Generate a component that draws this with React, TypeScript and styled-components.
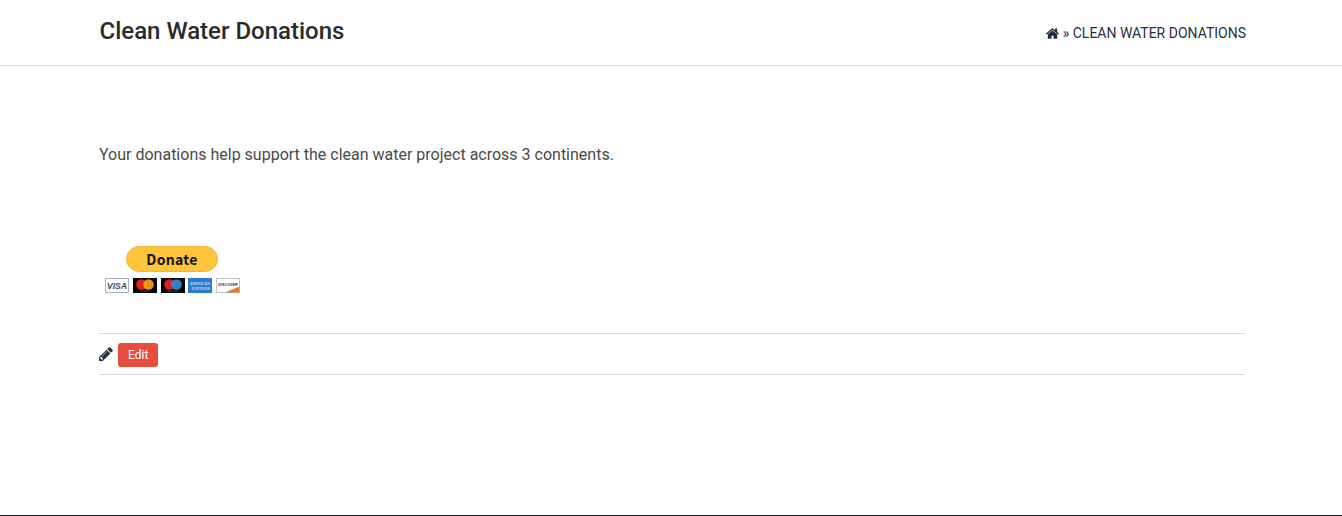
import React from "react";
import styled, { createGlobalStyle } from "styled-components";

const GlobalStyle = createGlobalStyle`
  html, body {
    margin: 0;
    padding: 0;
    background: #fff;
    font-family: Roboto, "Liberation Sans", sans-serif;
    overflow: hidden;
  }
`;

const S = {
  Page: styled.div`
    height: 516px;
    box-sizing: border-box;
    border-bottom: 1px solid #23282d;
    display: flex;
    flex-direction: column;
  `,
  TitleBar: styled.header`
    height: 66px;
    box-sizing: border-box;
    border-bottom: 1px solid #d8d8d8;
    padding: 0 96px 0 99.5px;
    display: flex;
    align-items: center;
    justify-content: space-between;
  `,
  Title: styled.h1`
    margin: 0 0 4px;
    font-size: 24px;
    line-height: 30px;
    font-weight: 500;
    color: #2b2b2b;
  `,
  Breadcrumb: styled.nav`
    margin-top: 1px;
    display: flex;
    align-items: center;
    gap: 4px;
    font-size: 14px;
    line-height: 20px;
    color: #1f2f46;
    text-transform: uppercase;
  `,
  HomeIcon: styled.svg`
    display: block;
    width: 13px;
    height: 11px;
    fill: #1f2b3a;
  `,
  Content: styled.main`
    padding: 0 97px 0 99px;
  `,
  Intro: styled.p`
    margin: 78px 0 0;
    font-size: 16px;
    line-height: 22px;
    color: #4a4a4a;
  `,
  DonateForm: styled.div`
    margin-top: 80px;
    width: 146px;
    display: flex;
    flex-direction: column;
    align-items: center;
  `,
  DonateButton: styled.button`
    width: 92px;
    height: 26px;
    padding: 0;
    border: 1px solid #f0b43c;
    border-radius: 13px;
    background: #ffc439;
    color: #111;
    font-family: "Noto Sans CJK JP", "Noto Sans", sans-serif;
    font-size: 14px;
    font-weight: 700;
    line-height: 24px;
    letter-spacing: 0.3px;
  `,
  Cards: styled.div`
    margin: 6px 0 0 1px;
    display: flex;
    gap: 3.75px;
  `,
  Card: styled.svg`
    display: block;
    width: 24px;
    height: 15px;
  `,
  EditRow: styled.div`
    margin-top: 40px;
    height: 42px;
    box-sizing: border-box;
    padding-top: 1px;
    border-top: 1px solid #d8d8d8;
    border-bottom: 1px solid #d8d8d8;
    display: flex;
    align-items: center;
    gap: 5px;
  `,
  PencilIcon: styled.svg`
    display: block;
    width: 14px;
    height: 14px;
    margin-top: -2px;
    fill: #23344a;
  `,
  EditButton: styled.a`
    height: 24px;
    padding: 0 10px;
    border-radius: 3px;
    background: #e74c3c;
    color: #fff;
    font-size: 12px;
    line-height: 24px;
  `,
};

const Visa = () => (
  <S.Card viewBox="0 0 24 15">
    <rect x="0.5" y="0.5" width="23" height="14" fill="#fff" stroke="#aab0bd" />
    <text x="12" y="10.8" textAnchor="middle" fontFamily="Liberation Sans" fontSize="8.5" fontWeight="700" fontStyle="italic" fill="#33466f">
      VISA
    </text>
  </S.Card>
);

const Circles = ({ left, right }: { left: string; right: string }) => (
  <S.Card viewBox="0 0 24 15">
    <rect width="24" height="15" fill="#050505" />
    <circle cx="8.5" cy="6.5" r="5.3" fill={left} />
    <circle cx="15.5" cy="6.5" r="5.3" fill={right} opacity="0.92" />
    <rect x="7" y="12.6" width="10" height="1" fill="#444" />
  </S.Card>
);

const Amex = () => (
  <S.Card viewBox="0 0 24 15">
    <rect width="24" height="15" fill="#2f79d0" />
    <text x="12" y="6.5" textAnchor="middle" fontFamily="Liberation Sans" fontSize="3.7" fontWeight="700" fill="#b5d3f3">
      AMERICAN
    </text>
    <text x="13" y="11.5" textAnchor="middle" fontFamily="Liberation Sans" fontSize="3.9" fontWeight="700" fill="#b5d3f3">
      EXPRESS
    </text>
  </S.Card>
);

const Discover = () => (
  <S.Card viewBox="0 0 24 15">
    <rect x="0.5" y="0.5" width="23" height="14" fill="#fff" stroke="#c4c4c4" />
    <path d="M9 14.5 L23.5 8.5 V14.5 Z" fill="#e8792b" />
    <text x="12" y="7.5" textAnchor="middle" fontFamily="Liberation Sans" fontSize="3.7" fontWeight="700" fill="#333">
      DISCOVER
    </text>
  </S.Card>
);

const App: React.FC = () => (
  <>
    <GlobalStyle />
    <S.Page>
      <S.TitleBar>
        <S.Title>Clean Water Donations</S.Title>
        <S.Breadcrumb>
          <S.HomeIcon viewBox="96 224 1600 1312">
            <path d="M1472 992v480q0 26-19 45t-45 19h-384v-384h-256v384h-384q-26 0-45-19t-19-45v-480q0-1 .5-3t.5-3l575-474 575 474q1 2 1 6zm223-69l-62 74q-8 9-21 11h-3q-13 0-21-7l-692-577-692 577q-12 8-24 7-13-2-21-11l-62-74q-8-10-7-23.5t11-21.5l719-599q32-26 76-26t76 26l244 204v-195q0-14 9-23t23-9h192q14 0 23 9t9 23v408l219 182q10 8 11 21.5t-7 23.5z" />
          </S.HomeIcon>
          <span>» Clean Water Donations</span>
        </S.Breadcrumb>
      </S.TitleBar>
      <S.Content>
        <S.Intro>Your donations help support the clean water project across 3 continents.</S.Intro>
        <S.DonateForm>
          <S.DonateButton type="button">Donate</S.DonateButton>
          <S.Cards>
            <Visa />
            <Circles left="#e2231a" right="#f79e1b" />
            <Circles left="#d9222a" right="#2f8fd8" />
            <Amex />
            <Discover />
          </S.Cards>
        </S.DonateForm>
        <S.EditRow>
          <S.PencilIcon viewBox="128 128 1536 1536">
            <path d="M491 1536l91-91-235-235-91 91v107h128v128h107zm523-928q0-22-22-22-10 0-17 7l-542 542q-7 7-7 17 0 22 22 22 10 0 17-7l542-542q7-7 7-17zm-54-192l416 416-832 832h-416v-416zm683 96q0 53-37 90l-166 166-416-416 166-165q36-38 90-38 53 0 91 38l235 234q37 39 37 91z" />
          </S.PencilIcon>
          <S.EditButton>Edit</S.EditButton>
        </S.EditRow>
      </S.Content>
    </S.Page>
  </>
);

export default App;
